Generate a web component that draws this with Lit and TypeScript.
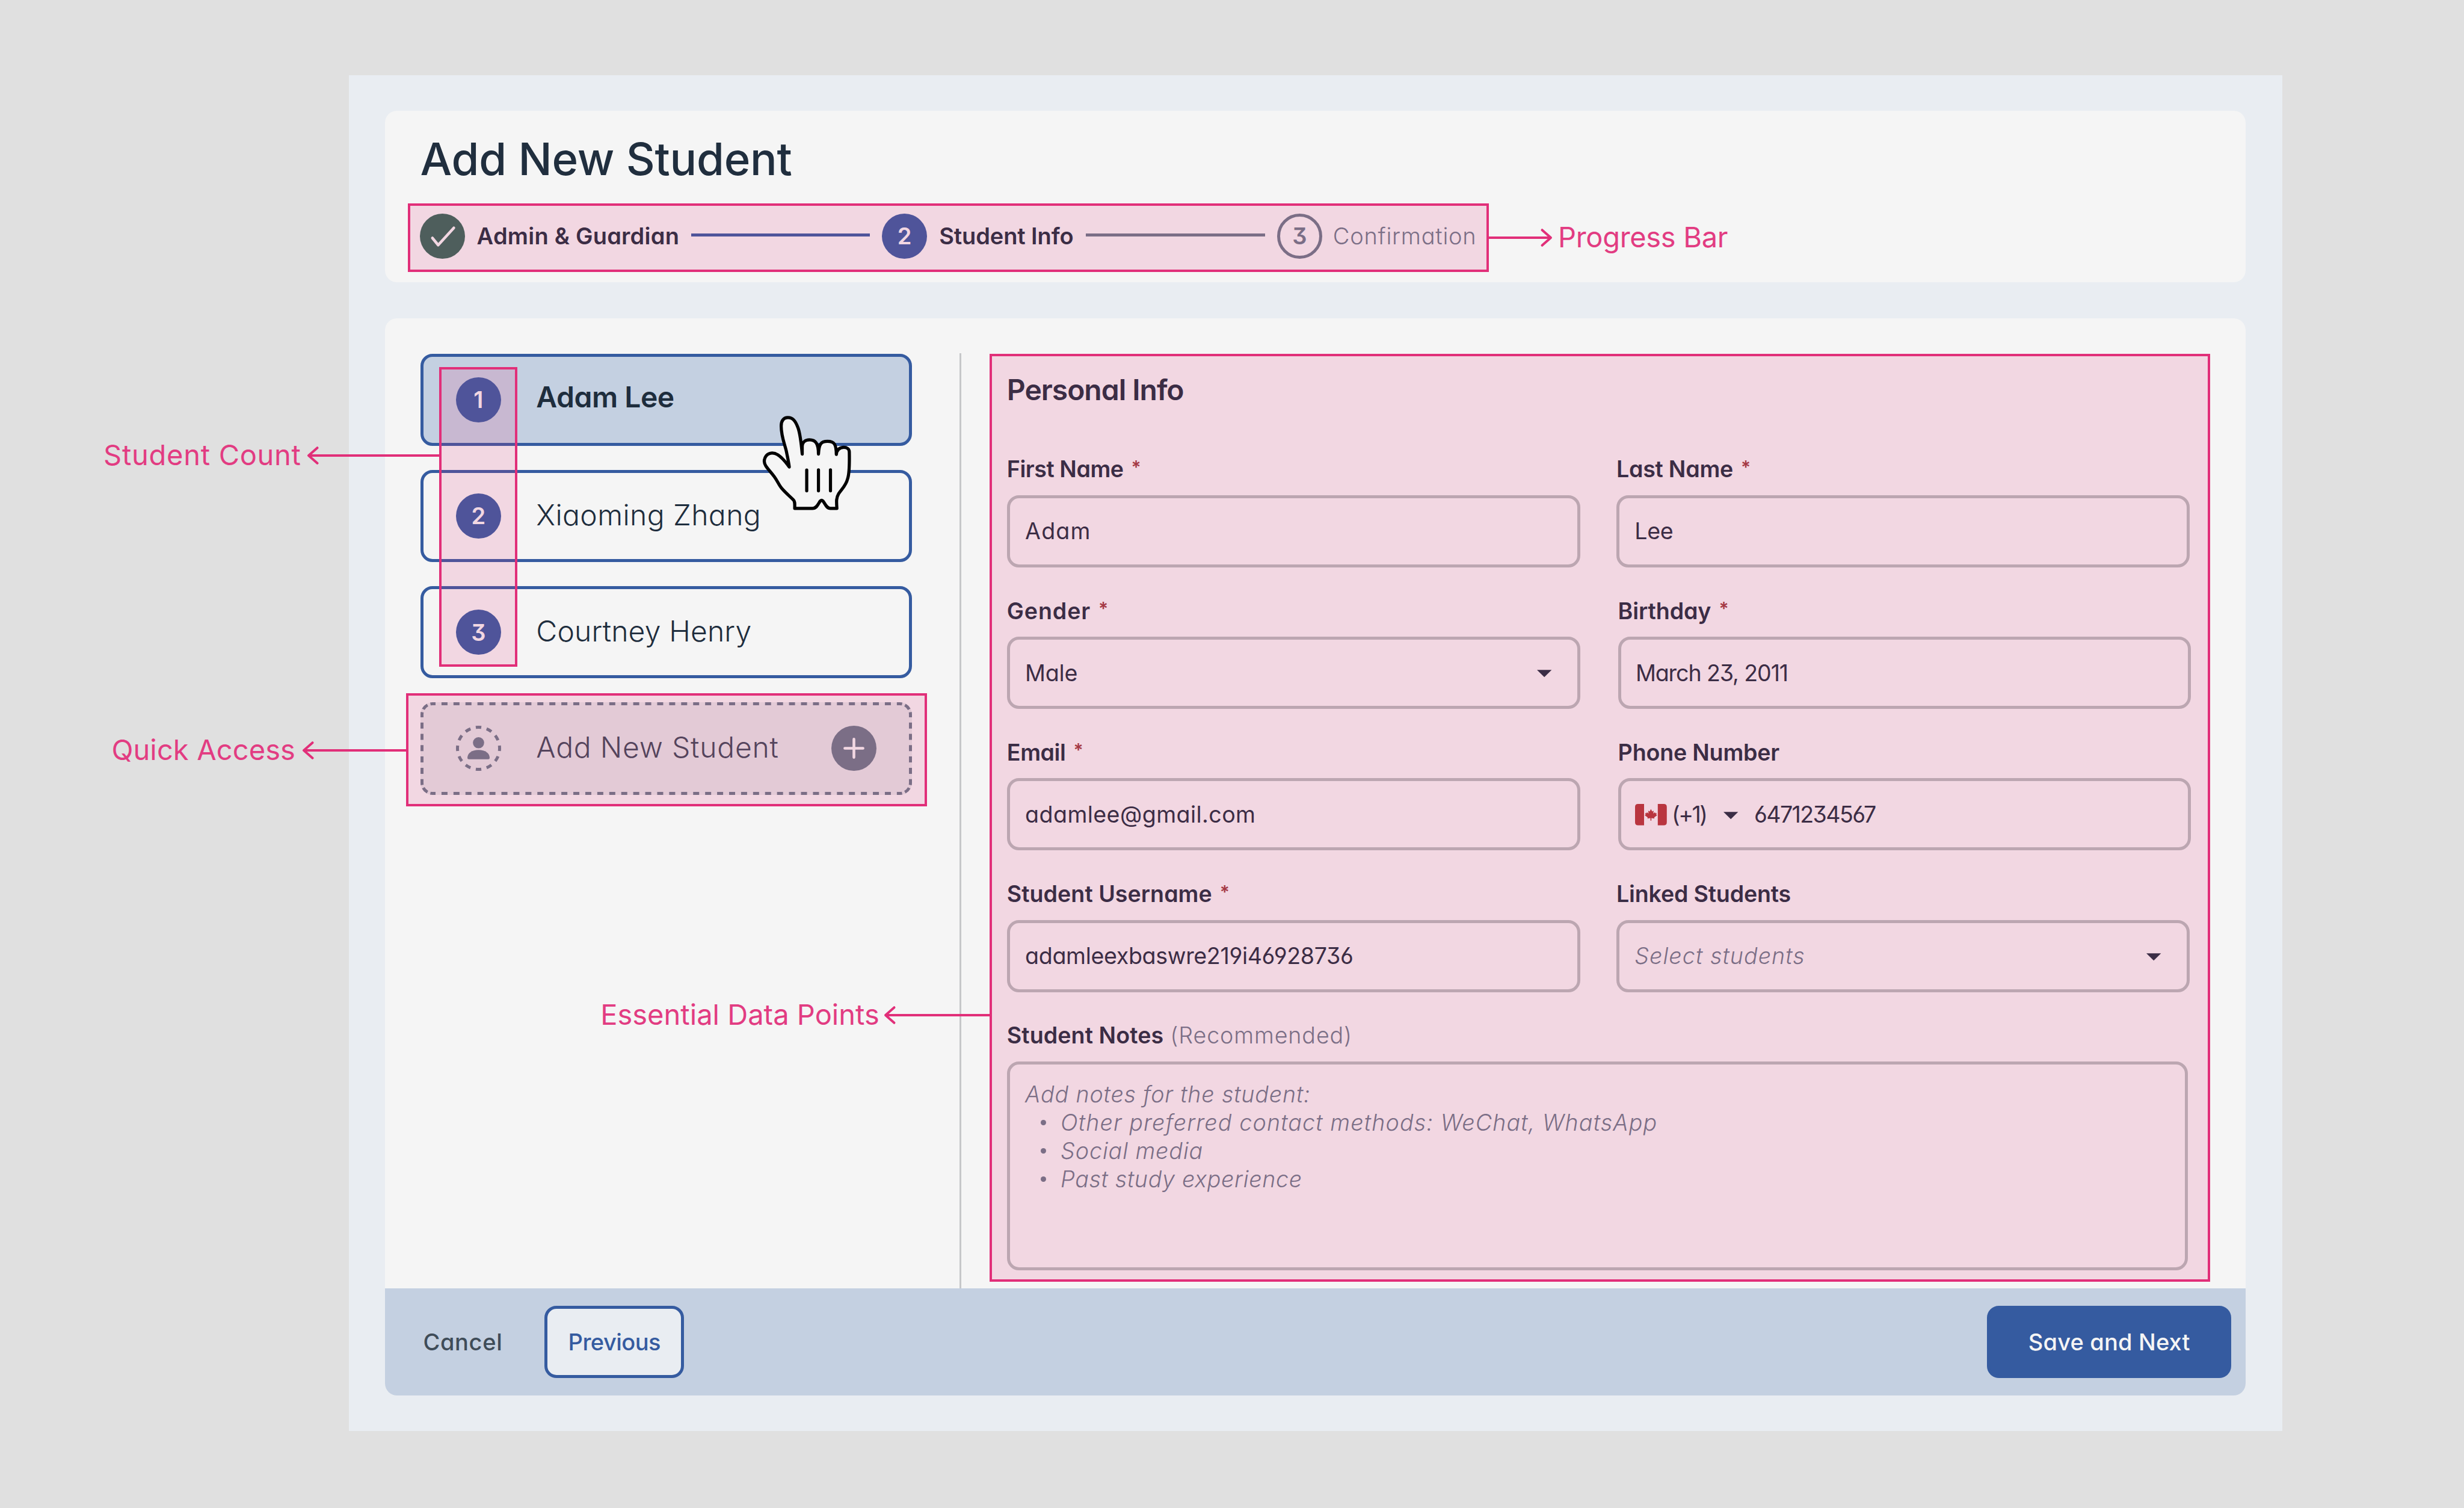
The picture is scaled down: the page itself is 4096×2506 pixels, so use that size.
import { LitElement, html, svg, css, nothing } from "lit";
import { customElement } from "lit/decorators.js";
import { classMap } from "lit/directives/class-map.js";

interface Field {
  label: string;
  labelTracking: number;
  value: string;
  tracking: number;
  required?: boolean;
  kind?: "select" | "phone";
  placeholder?: boolean;
  shifted?: boolean;
}

interface Callout {
  text: string;
  tracking: number;
  x: number;
  y: number;
  box: [number, number, number, number];
  tip: number;
  line: number;
  toRight?: boolean;
}

const FIELDS: Field[] = [
  { label: "First Name", labelTracking: -0.012, value: "Adam", tracking: 0.0296, required: true },
  { label: "Last Name", labelTracking: -0.0063, value: "Lee", tracking: -0.0102, required: true },
  { label: "Gender", labelTracking: 0.0237, value: "Male", tracking: -0.0067, required: true, kind: "select" },
  { label: "Birthday", labelTracking: -0.0025, value: "March 23, 2011", tracking: -0.0295, required: true, shifted: true },
  { label: "Email", labelTracking: -0.0112, value: "adamlee@gmail.com", tracking: 0.0114, required: true },
  { label: "Phone Number", labelTracking: -0.005, value: "6471234567", tracking: -0.0426, kind: "phone", shifted: true },
  { label: "Student Username", labelTracking: 0.0009, value: "adamleexbaswre219i46928736", tracking: -0.0091, required: true },
  { label: "Linked Students", labelTracking: -0.0048, value: "Select students", tracking: 0.029, kind: "select", placeholder: true },
];

const STUDENTS = [
  { name: "Adam Lee", tracking: -0.0103, active: true },
  { name: "Xiaoming Zhang", tracking: 0.0083, active: false },
  { name: "Courtney Henry", tracking: 0.0037, active: false },
];

const NOTES = [
  { text: "Other preferred contact methods: WeChat, WhatsApp", tracking: 0.0305 },
  { text: "Social media", tracking: 0.0245 },
  { text: "Past study experience", tracking: 0.0183 },
];

const CALLOUTS: Callout[] = [
  { text: "Progress Bar", tracking: -0.0067, x: 2590, y: 411.2, box: [678, 338, 2475, 452], tip: 2578, line: 395, toRight: true },
  { text: "Student Count", tracking: 0.0152, x: 172.1, y: 773.4, box: [730, 610, 860, 1108], tip: 513, line: 757 },
  { text: "Quick Access", tracking: 0.0027, x: 185.4, y: 1263, box: [675, 1152, 1541, 1340], tip: 505, line: 1247 },
  { text: "Essential Data Points", tracking: 0.0005, x: 998.2, y: 1703.3, box: [1645, 588, 3674, 2130], tip: 1472, line: 1687 },
];

const spaced = (text: string, tracking: number, cls = "") =>
  html`<span class=${cls} style="letter-spacing:${tracking}em">${text}</span>`;

const caret = html`<svg class="caret" viewBox="0 0 24 12"><path d="M0 0H24L12 12Z" /></svg>`;

@customElement("app-root")
export class AppRoot extends LitElement {
  static styles = css`
    :host {
      display: block;
      position: relative;
      box-sizing: border-box;
      width: 4096px;
      height: 2506px;
      padding: 125px 0 0 580px;
      overflow: hidden;
      background: #e0e0e0;
      color: #1e2d3d;
      font-family: Inter, "Liberation Sans", sans-serif;
      font-feature-settings: "cv11", "cv09", "cv03", "cv04";
      white-space: nowrap;
    }
    * { box-sizing: border-box; }
    svg { display: block; overflow: visible; flex: none; }

    .window {
      display: flex;
      flex-direction: column;
      gap: 60px;
      width: 3214px;
      height: 2253px;
      padding: 59px 61px 59px 60px;
      background: #e9edf2;
    }
    .card { background: #f5f5f5; border-radius: 20px; }

    .header { height: 285px; padding: 34.6px 58px 0 58.6px; }
    .title { font-size: 74.3px; font-weight: 500; line-height: 90px; color: #202e3e; }
    .stepper {
      display: flex;
      align-items: center;
      gap: 20px;
      margin: 46px 0 0 -1px;
      font-size: 38px;
      font-weight: 600;
    }
    .badge {
      display: flex;
      flex: none;
      align-items: center;
      justify-content: center;
      width: 75px;
      height: 75px;
      border-radius: 50%;
      background: #355ba0;
      color: #f5f5f5;
      font-size: 38px;
      font-weight: 600;
    }
    .badge.done { background: #346758; }
    .badge.pending { background: none; border: 5px solid #697a89; color: #697a89; }
    .badge.add { background: #697a89; }
    .badge svg { width: 75px; height: 75px; fill: none; stroke: #f5f5f5; stroke-width: 4.6; stroke-linecap: round; stroke-linejoin: round; }
    .step-first { width: 336px; }
    .step-second { width: 224px; }
    .step-last { margin-left: -2px; font-weight: 300; color: #697a89; }
    .track { width: 297.6px; height: 5px; margin-bottom: 4px; background: #355ba0; }
    .track.pending { background: #697a89; }

    .main { display: flex; flex: 1; flex-direction: column; min-height: 0; overflow: hidden; }
    .body { display: flex; flex: 1; }

    .students {
      display: flex;
      flex-direction: column;
      gap: 39.3px;
      width: 875.8px;
      padding: 58.5px 0 0 58.8px;
    }
    .student {
      display: flex;
      align-items: center;
      gap: 58.5px;
      height: 153.8px;
      padding: 0 54px;
      border: 5px solid #355ba0;
      border-radius: 20px;
      font-size: 48px;
      font-weight: 300;
    }
    .student .name { padding-bottom: 4px; }
    .student.active { background: #c4d0e1; font-weight: 600; }
    .student.active .name { padding-bottom: 9.2px; }
    .student.new {
      position: relative;
      border-color: transparent;
      background: #e3e5e7;
      background-clip: border-box;
      background-origin: border-box;
      color: #3b4858;
    }
    .student.new .name { flex: 1; }
    .dashes { position: absolute; left: -5px; top: -5px; width: 817px; height: 154px; fill: none; stroke: #697a89; stroke-width: 5; }
    .avatar { width: 75px; height: 75px; fill: #697a89; }
    .avatar circle.ring { fill: none; stroke: #697a89; stroke-width: 5; stroke-dasharray: 9.3 9.2; stroke-dashoffset: 4.65; }

    .divider { width: 3px; margin: 58px 0 0 79px; background: #c6c7c9; }

    .form { width: 1965px; margin-left: 76px; padding-top: 89.1px; }
    .form h2 { margin: 0 0 79.2px; font-size: 48px; font-weight: 600; line-height: 60px; }
    .grid { display: grid; grid-template-columns: 953.3px 952.6px; column-gap: 59.9px; row-gap: 49.7px; }
    .field { display: flex; flex-direction: column; gap: 19.6px; }
    .field.shifted { margin: 0 -2.6px 0 2.6px; }
    .field.wide { grid-column: 1 / 3; width: 1963px; }
    .label { height: 46px; font-size: 37.6px; font-weight: 600; line-height: 46px; }
    .star { margin-left: 13px; color: #9b3c3c; font-size: 30px; line-height: 0; vertical-align: 6.5px; }
    .hint { margin-left: 11px; font-weight: 300; color: #697a89; }
    .input {
      display: flex;
      align-items: center;
      height: 120px;
      padding: 0 42.4px 0 25.3px;
      border: 5px solid #b6bbbb;
      border-radius: 20px;
      font-size: 37.6px;
      font-weight: 400;
    }
    .shifted .input { padding-left: 24.3px; }
    .input .value { flex: 1; }
    .input .value.placeholder, .notes { font-style: italic; font-weight: 300; color: #697a89; }
    .caret { width: 24.4px; height: 12.5px; margin-top: 3px; fill: #1e2d3d; }
    .flag { width: 52.8px; height: 35.6px; margin: 0 8px 0 -0.6px; fill: #b23736; }
    .dial { width: 86px; }
    .dial + .caret { margin-right: 26.5px; }
    .notes {
      height: 346.8px;
      padding: 25.5px 25.3px;
      border: 5px solid #b6bbbb;
      border-radius: 20px;
      font-size: 37.6px;
      line-height: 47px;
    }
    .notes ul { margin: 0; padding: 0 0 0 26px; list-style: none; }
    .notes li { display: flex; align-items: center; gap: 24px; }
    .notes li::before { content: ""; width: 9px; height: 9px; border-radius: 50%; background: #697a89; }

    .footer {
      display: flex;
      align-items: center;
      height: 178px;
      padding: 0 23.6px 0 63.4px;
      background: #c4d0e1;
      font-size: 38px;
      font-weight: 500;
    }
    .cancel { width: 201.7px; color: #3f4c58; }
    .button {
      display: flex;
      align-items: center;
      justify-content: center;
      width: 232.3px;
      height: 119.4px;
      border: 5px solid #355ba0;
      border-radius: 20px;
      background: #e9edf2;
      color: #355ba0;
    }
    .button.primary { width: 406.3px; margin-left: auto; background: #355ba0; color: #f5f5f5; }

    .overlay { position: absolute; left: 0; top: 0; width: 4096px; height: 2506px; fill: none; stroke: #e12f79; stroke-width: 4; }
    .overlay rect { fill: rgba(225, 47, 121, 0.15); stroke: none; }
    .overlay .arrow { stroke-linecap: round; stroke-linejoin: round; }
    .callout { position: absolute; color: #e23c82; font-size: 47px; line-height: 60px; font-feature-settings: normal; }
    .pointer {
      position: absolute;
      left: 1252.8px;
      top: 674px;
      width: 183.8px;
      height: 183.8px;
      fill: #f5f5f5;
      stroke: #000;
      stroke-width: 23;
      stroke-linecap: round;
      stroke-linejoin: round;
    }
  `;

  private header() {
    return html`<header class="card header">
      <div class="title">${spaced("Add New Student", -0.0029)}</div>
      <div class="stepper">
        <div class="badge done"><svg viewBox="0 0 75 75"><path d="M20.8 40.5L30.4 52.2L56.4 23.8" /></svg></div>
        ${spaced("Admin & Guardian", 0.0061, "step-first")}
        <div class="track"></div>
        <div class="badge">2</div>
        ${spaced("Student Info", -0.003, "step-second")}
        <div class="track pending"></div>
        <div class="badge pending">3</div>
        ${spaced("Confirmation", 0.0197, "step-last")}
      </div>
    </header>`;
  }

  private dashedBorder() {
    const side = "10 9.92";
    const edge = "10 8.78";
    const corner = "3.7 5 10 5 3.7 100";
    return html`<svg class="dashes" viewBox="0 0 817 154">
      ${[
        ["M20 2.5H797", side, 5],
        ["M20 151.5H797", side, 5],
        ["M2.5 20V134", edge, 5],
        ["M814.5 20V134", edge, 5],
      ].map(([d, dash, off]) => svg`<path d=${d} stroke-dasharray=${dash} stroke-dashoffset=${off} />`)}
      ${["M2.5 20A17.5 17.5 0 0 1 20 2.5", "M797 2.5A17.5 17.5 0 0 1 814.5 20", "M814.5 134A17.5 17.5 0 0 1 797 151.5", "M20 151.5A17.5 17.5 0 0 1 2.5 134"].map(
        (d) => svg`<path d=${d} stroke-dasharray=${corner} />`
      )}
    </svg>`;
  }

  private students() {
    return html`<div class="students">
      ${STUDENTS.map(
        (s, i) => html`<div class=${classMap({ student: true, active: s.active })}>
          <div class="badge">${i + 1}</div>
          ${spaced(s.name, s.tracking, "name")}
        </div>`
      )}
      <div class="student new">
        ${this.dashedBorder()}
        <svg class="avatar" viewBox="0 0 75 75">
          <circle class="ring" cx="37.5" cy="37.5" r="35" pathLength="222" transform="rotate(-90 37.5 37.5)" />
          <circle cx="37.5" cy="28.3" r="9.3" />
          <path d="M19 53.5C19 45.5 26.5 40.2 37.5 40.2S56 45.5 56 53.5Q56 55.8 53.6 55.8H21.4Q19 55.8 19 53.5Z" />
        </svg>
        ${spaced("Add New Student", 0.0163, "name")}
        <div class="badge add"><svg viewBox="0 0 75 75"><path d="M22.4 37.5H52.6M37.5 22.4V52.6" /></svg></div>
      </div>
    </div>`;
  }

  private field(f: Field) {
    return html`<div class=${classMap({ field: true, shifted: !!f.shifted })}>
      <div class="label">${spaced(f.label, f.labelTracking)}${f.required ? html`<span class="star">*</span>` : nothing}</div>
      <div class="input">
        ${f.kind === "phone"
          ? html`<svg class="flag" viewBox="0 0 52.8 35.6">
                <path d="M15 0V35.6H5Q0 35.6 0 30.6V5Q0 0 5 0ZM37.8 0V35.6H47.8Q52.8 35.6 52.8 30.6V5Q52.8 0 47.8 0Z" />
                <path d="M26.4 8.6L28.5 12.4L31 11.3L30.3 16L33 13.8L33.8 15.4L36 15.1L35.2 17.6L36.7 18.8L31.8 22.6L32.2 24.2L27.2 23.6V27.8H25.6V23.6L20.6 24.2L21 22.6L16.1 18.8L17.6 17.6L16.8 15.1L19 15.4L19.8 13.8L22.5 16L21.8 11.3L24.3 12.4Z" />
              </svg>
              ${spaced("(+1)", -0.0688, "dial")} ${caret}`
          : nothing}
        ${spaced(f.value, f.tracking, f.placeholder ? "value placeholder" : "value")}
        ${f.kind === "select" ? caret : nothing}
      </div>
    </div>`;
  }

  private form() {
    return html`<section class="form">
      <h2>${spaced("Personal Info", -0.0212)}</h2>
      <div class="grid">
        ${FIELDS.map((f) => this.field(f))}
        <div class="field wide">
          <div class="label">${spaced("Student Notes", 0.0023)}${spaced("(Recommended)", 0.0242, "hint")}</div>
          <div class="notes">
            ${spaced("Add notes for the student:", 0.0229)}
            <ul>${NOTES.map((n) => html`<li>${spaced(n.text, n.tracking)}</li>`)}</ul>
          </div>
        </div>
      </div>
    </section>`;
  }

  private callouts() {
    return html`<svg class="overlay" viewBox="0 0 4096 2506">
        ${CALLOUTS.map(({ box: [l, t, r, b], tip, line, toRight }) => {
          const back = toRight ? tip - 14.5 : tip + 14.5;
          return svg`<rect x=${l} y=${t} width=${r - l} height=${b - t} />
            <path d="M${l + 2} ${t + 2}H${r - 2}V${b - 2}H${l + 2}Z" />
            <path d="M${toRight ? r : l} ${line}H${tip}" />
            <path class="arrow" d="M${back} ${line - 12.8}L${tip} ${line}L${back} ${line + 12.8}" />`;
        })}
      </svg>
      ${CALLOUTS.map(
        (c) => html`<span class="callout" style="left:${c.x}px;top:${c.y - 47.1}px;letter-spacing:${c.tracking}em">${c.text}</span>`
      )}`;
  }

  render() {
    return html`<div class="window">
        ${this.header()}
        <main class="card main">
          <div class="body">${this.students()}<div class="divider"></div>${this.form()}</div>
          <footer class="footer">
            ${spaced("Cancel", 0.0175, "cancel")}
            <div class="button">${spaced("Previous", -0.0142)}</div>
            <div class="button primary">${spaced("Save and Next", 0.0047)}</div>
          </footer>
        </main>
      </div>
      ${this.callouts()}
      <svg class="pointer" viewBox="0 0 810 810">
        <path
          d="M260 450C225 400 180 346 134 348C98 349 77 377 77 408C78 444 112 468 150 520C175 554 184 582 205 606C236 642 262 662 290 690C303 702 300 720 300 753H430C465 753 474 713 488 698Q497 690 506 698C522 714 530 753 562 753H609C605 700 604 674 622 645C645 610 675 588 688 535C700 500 702 440 700 340C700 317 682 305 657 306C627 308 608 326 605 358C604 282 590 262 540 262C492 262 478 282 474 355C474 275 452 251 408 251C375 251 357 270 355 296V355C350 300 340 208 325 165C305 110 285 88 250 88C215 88 201 115 201 150C201 230 230 290 240 340C250 390 257 420 260 450Z"
        />
        <path d="M388 472V624M474 471V624M562 471V624" />
      </svg>`;
  }
}
